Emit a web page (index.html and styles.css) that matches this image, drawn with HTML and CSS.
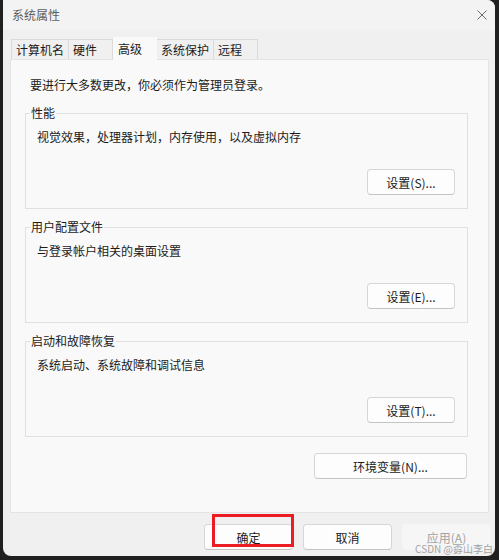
FILE: index.html
```html
<!DOCTYPE html>
<html lang="zh-CN">
<head>
    <meta charset="UTF-8">
    <title>系统属性</title>
    <link rel="stylesheet" href="styles.css">
</head>
<body>
    <div class="window">
        <div class="titlebar">
            <span class="title">系统属性</span>
            <svg class="close" width="10" height="10" viewBox="0 0 10 10">
                <path d="M0.5 0.5 L9.5 9.5 M9.5 0.5 L0.5 9.5" stroke="#6b6b6b" stroke-width="1" fill="none"/>
            </svg>
        </div>

        <div class="tabs">
            <div class="tab">计算机名</div>
            <div class="tab">硬件</div>
            <div class="tab active">高级</div>
            <div class="tab">系统保护</div>
            <div class="tab">远程</div>
        </div>

        <div class="panel">
            <p class="intro">要进行大多数更改，你必须作为管理员登录。</p>

            <div class="group">
                <div class="group-title">性能</div>
                <p class="group-text">视觉效果，处理器计划，内存使用，以及虚拟内存</p>
                <div class="group-actions">
                    <button class="btn">设置(S)...</button>
                </div>
            </div>

            <div class="group">
                <div class="group-title">用户配置文件</div>
                <p class="group-text">与登录帐户相关的桌面设置</p>
                <div class="group-actions">
                    <button class="btn">设置(E)...</button>
                </div>
            </div>

            <div class="group">
                <div class="group-title">启动和故障恢复</div>
                <p class="group-text">系统启动、系统故障和调试信息</p>
                <div class="group-actions">
                    <button class="btn">设置(T)...</button>
                </div>
            </div>

            <div class="env-row">
                <button class="btn btn-wide">环境变量(N)...</button>
            </div>
        </div>

        <div class="footer">
            <button class="btn btn-footer">确定</button>
            <button class="btn btn-footer">取消</button>
            <button class="btn btn-footer" disabled>应用(A)</button>
        </div>

        <div class="highlight"></div>
        <div class="watermark">CSDN @孬山李白</div>
    </div>
</body>
</html>
```

FILE: styles.css
```css
body {
    margin: 0;
    height: 560px;
    background: #202020;
    font-family: "Noto Sans CJK SC", "Noto Sans", sans-serif;
    font-size: 12px;
    color: #1b1b1b;
    overflow: hidden;
}

.window {
    position: relative;
    margin-left: 3px;
    width: 492px;
    height: 556px;
    background: #f0f0f0;
    border-radius: 0 8px 8px 8px;
    overflow: hidden;
}

.titlebar {
    height: 30px;
    display: flex;
    align-items: center;
    justify-content: space-between;
    padding: 0 8px 0 9px;
    background: #f3f3f3;
}

.title {
    color: #5c5c5c;
    line-height: 16px;
}

.close {
    display: block;
}

.tabs {
    display: flex;
    align-items: flex-end;
    height: 21px;
    margin-top: 8px;
    padding-left: 8px;
    position: relative;
    z-index: 1;
}

.tab {
    box-sizing: border-box;
    min-width: 44px;
    height: 20px;
    padding: 0 4px;
    line-height: 19px;
    border: 1px solid #dadada;
    border-bottom: none;
    border-left: none;
    background: #f0f0f0;
}

.tab:first-child {
    border-left: 1px solid #dadada;
}

.tab.active {
    height: 23px;
    margin-bottom: -1px;
    padding: 0 5px;
    line-height: 21px;
    background: #f9f9f9;
    border-color: #f9f9f9;
}

.panel {
    box-sizing: border-box;
    margin-left: 7px;
    width: 479px;
    height: 454px;
    border: 1px solid #e4e4e4;
    background: #f9f9f9;
}

.intro {
    margin: 17px 0 0 19px;
    line-height: 16px;
}

.group {
    box-sizing: border-box;
    margin: 20px 0 0 14px;
    width: 443px;
    height: 96px;
    border: 1px solid #e0e0e0;
}

.group + .group {
    margin-top: 18px;
}

.group-title {
    width: fit-content;
    margin: -9px 0 0 4px;
    padding: 0 1px;
    line-height: 16px;
    background: #f9f9f9;
}

.group-text {
    margin: 8px 0 0 11px;
    line-height: 16px;
}

.group-actions {
    display: flex;
    justify-content: flex-end;
    margin-top: 24px;
    padding-right: 12px;
}

.btn {
    box-sizing: border-box;
    width: 88px;
    height: 26px;
    padding: 0;
    font-family: inherit;
    font-size: 12px;
    color: #1b1b1b;
    background: #fdfdfd;
    border: 1px solid #d6d6d6;
    border-bottom-color: #c4c4c4;
    border-radius: 4px;
}

.env-row {
    display: flex;
    justify-content: flex-end;
    margin-top: 16px;
    padding-right: 21px;
}

.btn-wide {
    width: 153px;
}

.footer {
    display: flex;
    justify-content: flex-end;
    gap: 10px;
    margin-top: 11px;
    padding-right: 4px;
}

.btn-footer {
    width: 89px;
    height: 26px;
}

.btn-footer:disabled {
    color: #a3a3a3;
    background: #f6f6f6;
    border-color: #f6f6f6;
}

.highlight {
    position: absolute;
    left: 209px;
    top: 514px;
    width: 82px;
    height: 33px;
    box-sizing: border-box;
    border: 3px solid #ec1c24;
}

.watermark {
    position: absolute;
    right: 2px;
    top: 542px;
    font-size: 10px;
    line-height: 14px;
    color: rgba(140, 140, 140, 0.8);
}
```
